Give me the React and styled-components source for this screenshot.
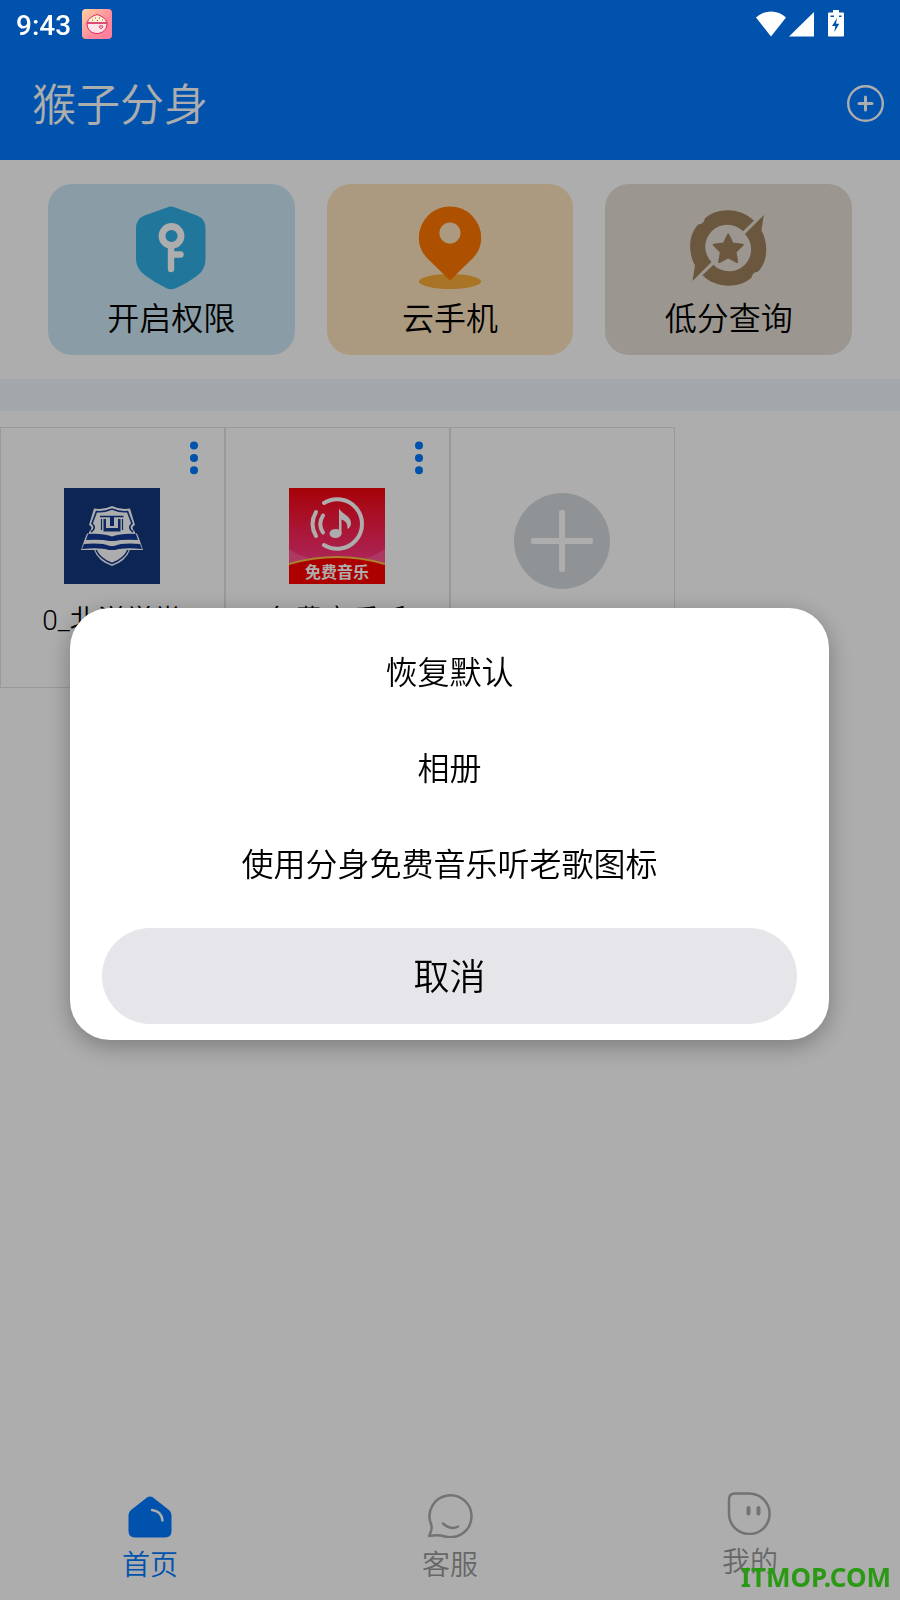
import styled, { createGlobalStyle } from 'styled-components';

const shortcuts = [
    { id: 'permission', label: '开启权限', color: '#cce8f5', Icon: KeyShieldIcon },
    { id: 'cloud', label: '云手机', color: '#fee4bd', Icon: PinIcon },
    { id: 'score', label: '低分查询', color: '#e5ded5', Icon: StarRingIcon },
];

const apps = [
    { id: 1, name: '0_北洋学堂', Icon: SchoolIcon },
    { id: 2, name: '免费音乐听', Icon: MusicIcon },
];

const options = ['恢复默认', '相册', '使用分身免费音乐听老歌图标'];

const tabs = [
    { id: 'home', label: '首页', active: true, Icon: HomeIcon },
    { id: 'service', label: '客服', active: false, Icon: ServiceIcon },
    { id: 'mine', label: '我的', active: false, Icon: MineIcon },
];

function App() {
    return (
        <Screen>
            <GlobalStyle />

            <StatusBar>
                <StatusGroup>
                    <Clock>9:43</Clock>
                    <RiceIcon />
                </StatusGroup>
                <StatusIcons />
            </StatusBar>

            <Header>
                <Title>猴子分身</Title>
                <IconButton aria-label="添加">
                    <svg width="38" height="38" viewBox="0 0 38 38" fill="none" stroke="#fff" strokeLinecap="round">
                        <circle cx="19.5" cy="18.5" r="17.3" strokeWidth="2.4" />
                        <path d="M19.5 12v13M13 18.5h13" strokeWidth="3" />
                    </svg>
                </IconButton>
            </Header>

            <Shortcuts>
                {shortcuts.map(({ id, label, color, Icon }) => (
                    <ShortcutCard key={id} $color={color}>
                        <Icon />
                        <ShortcutLabel>{label}</ShortcutLabel>
                    </ShortcutCard>
                ))}
            </Shortcuts>

            <Band />

            {/* 分身应用列表 */}
            <AppGrid>
                {apps.map(({ id, name, Icon }) => (
                    <AppCell key={id}>
                        <MoreButton aria-label="更多">
                            <svg width="10" height="36" viewBox="0 0 10 36" fill="#007aff">
                                <circle cx="5" cy="5.5" r="4" />
                                <circle cx="5" cy="18" r="4" />
                                <circle cx="5" cy="30.2" r="4" />
                            </svg>
                        </MoreButton>
                        <Icon />
                        <AppName>{name}</AppName>
                    </AppCell>
                ))}
                <AppCell>
                    <AddButton aria-label="添加应用">
                        <svg width="96" height="96" viewBox="0 0 96 96">
                            <circle cx="48" cy="48" r="48" fill="#d4d9dc" />
                            <rect x="45" y="17" width="6" height="62" rx="2" fill="#fff" />
                            <rect x="17" y="45" width="62" height="6" rx="2" fill="#fff" />
                        </svg>
                    </AddButton>
                </AppCell>
            </AppGrid>

            <TabBar>
                {tabs.map(({ id, label, active, Icon }) => (
                    <Tab key={id} href={`#${id}`} $active={active}>
                        <Icon />
                        <span>{label}</span>
                    </Tab>
                ))}
            </TabBar>

            <Scrim>
                <Dialog role="dialog" aria-modal="true" aria-label="选择图标">
                    {options.map((option) => (
                        <OptionButton key={option}>{option}</OptionButton>
                    ))}
                    <CancelButton>取消</CancelButton>
                </Dialog>
            </Scrim>

            <Watermark>ITMOP.COM</Watermark>
        </Screen>
    );
}

export default App;

function RiceIcon() {
    return (
        <svg width="30" height="30" viewBox="0 0 30 30">
            <defs>
                <linearGradient id="rice" x1="0" y1="0" x2="1" y2="1">
                    <stop offset="0" stopColor="#ffd3a0" />
                    <stop offset=".6" stopColor="#ff8a9c" />
                    <stop offset="1" stopColor="#ff7b9c" />
                </linearGradient>
            </defs>
            <rect width="30" height="30" rx="4" fill="url(#rice)" />
            <path d="M5.5 13.5C6 9 11 7 15 5.5C19 7 24 9 24.500 13.500Z" fill="#fdf3d3" stroke="#d8285c" />
            <path d="M5 14.500H25C25 21 20 24.500 15 24.500S5 21 5 14.500Z" fill="#fde3ea" stroke="#d8285c" />
            <path d="M4 14H26" stroke="#e0557c" strokeWidth="1.600" />
            <path d="M10 11h1M13 9h1M17 9h1M15 11.500h1M20 11h1" stroke="#d8285c" />
            <path d="M19 20l-2-2 1-1.500 1 .8 1.200-.8.8 1.500Z" fill="#fbb" stroke="#d8285c" strokeWidth=".8" />
        </svg>
    );
}

function StatusIcons() {
    return (
        <svg width="90" height="28" viewBox="0 0 90 28" fill="#fff">
            <path d="M15 26.500L0 7.500C8-.5 22-.5 30 7.500Z" />
            <path d="M58 2V26.500H33Z" />
            <path
                fillRule="evenodd"
                d="M77 0h6v2.500h4q1 0 1 1v22q0 1-1 1H73q-1 0-1-1v-22q0-1 1-1h4ZM81 8l-5 8h3.300l-1 6 5-8.300H80ZM74.500 5.500v1.500h3.500v-1.500ZM83 5.500v1.500h2.500v-1.500Z"
            />
        </svg>
    );
}

function KeyShieldIcon() {
    return (
        <svg width="84" height="84" viewBox="0 0 84 84">
            <path
                d="M38 1.500Q42-.3 46 1.500L68 9.500Q76.500 13 76.500 22V53Q76.500 63 69 69Q58 77.500 46 82.500Q42 84 38 82.500Q26 77 15 68.500Q7 62 7 53V22Q7 13 15.500 9.500Z"
                fill="#32aee5"
            />
            <circle cx="42.500" cy="30" r="9.500" fill="none" stroke="#fff" strokeWidth="6.800" />
            <path d="M42 41V63M42 48.500H51.500" stroke="#fff" strokeWidth="6.400" strokeLinecap="round" />
        </svg>
    );
}

function PinIcon() {
    return (
        <svg width="84" height="84" viewBox="0 0 84 84">
            <ellipse cx="42" cy="75.500" rx="31.200" ry="7.500" fill="#fbac38" />
            <path
                fillRule="evenodd"
                d="M42 .5A31.200 31.200 0 0 1 73.200 31.700C73.200 40 70 47 64.500 52.500L42 74.500L19.500 52.500C14 47 10.800 40 10.800 31.700A31.200 31.200 0 0 1 42 .5ZM42 16.500A10.600 10.600 0 1 0 42 37.700A10.600 10.600 0 1 0 42 16.500Z"
                fill="#ff7600"
            />
        </svg>
    );
}

function StarRingIcon() {
    const half = 'M5.500 75L8 59.500C1 47 1 29 11.500 18.300Q16.500 18.500 18 12.300C30 1.500 53 1 67 14.700L56 25.300A21.700 21.700 0 0 0 24.500 56Z';

    return (
        <svg width="84" height="84" viewBox="0 0 84 84" fill="#9d805b">
            <path d={half} />
            <path d={half} transform="rotate(180 41.2 42)" />
            <path
                d="M41.200 28.500L45.500 37.500L55.700 38.800L48.500 46L50.200 56L41.200 51.300L32.200 56L33.900 46L26.700 38.800L36.900 37.500Z"
                stroke="#9d805b"
                strokeWidth="2"
                strokeLinejoin="round"
            />
        </svg>
    );
}

function SchoolIcon() {
    return (
        <svg width="96" height="96" viewBox="0 0 96 96">
            <rect width="96" height="96" fill="#12377d" />
            <path d="M48 18Q56 22 66 20.500L71 37Q66 39 71 44V45.500H73L76 53L79 62H66Q62 73 48 78Q34 73 30 62H17L20 53L23 45.500H25V44Q30 39 25 37L30 20.500Q40 22 48 18Z" fill="#fff" />
            <path d="M48 21Q56 24.500 63.500 23.500L68 35.500Q63 40 69 44M48 21Q40 24.500 32.500 23.500L28 35.500Q33 40 27 44" fill="none" stroke="#123a92" strokeWidth="1.600" />
            <path d="M36 28.500H59.500" stroke="#123a92" strokeWidth="1.600" />
            <path d="M46 28.500h4v9.500h-4ZM42 31v9h12v-9h2.500v12.500h-17V31Z" fill="#123a92" />
            <path d="M37.500 31v11M58.500 31v11" stroke="#123a92" strokeWidth="1.200" />
            <path d="M24 46Q38 45 48 48.500Q58 45 72 46L74 52Q58 51 51 53H45Q38 51 22 52ZM20 56Q38 54.500 46 58H50Q58 54.500 76 56L78 61Q60 59 51 62H45Q36 59 18 61Z" fill="#123a92" />
            <path d="M32 62Q36 71 48 75.500Q60 71 64 62" fill="none" stroke="#123a92" strokeWidth="1.600" />
        </svg>
    );
}

function MusicIcon() {
    return (
        <svg width="96" height="96" viewBox="0 0 96 96">
            <defs>
                <linearGradient id="music" x1="0" y1="0" x2="0" y2="1">
                    <stop offset="0" stopColor="#f5040c" />
                    <stop offset=".75" stopColor="#ff3680" />
                </linearGradient>
            </defs>
            <rect width="96" height="96" fill="url(#music)" />
            <path d="M0 61Q10 68 20 70L0 76ZM96 61Q86 68 76 70L96 76Z" fill="#ff6aa0" opacity=".6" />
            <path d="M0 76Q48 62 96 76V96H0Z" fill="#fe0000" />
            <path d="M0 76Q48 62 96 76" fill="none" stroke="#fcbe40" strokeWidth="2" />
            <g fill="none" stroke="#fff" strokeWidth="4" strokeLinecap="round">
                <path d="M35 15A24.800 24.800 0 1 1 35 57" />
                <path d="M27 24Q20 36 27 48M34 27.500Q28.500 36 34 44.500" />
            </g>
            <ellipse cx="46.500" cy="45.500" rx="6" ry="4.500" fill="#fff" />
            <path d="M50 46V20.500C54 27 62 28 62 35Q62 39 58.500 41Q59 33 52.500 31.500V46Z" fill="#fff" />
            <text
                x="48"
                y="90"
                fill="#fff"
                textAnchor="middle"
                fontSize="16"
                fontWeight="700"
                fontFamily="'Noto Sans CJK SC', sans-serif"
            >
                免费音乐
            </text>
        </svg>
    );
}

function HomeIcon() {
    return (
        <svg width="46" height="46" viewBox="0 0 46 46">
            <path d="M20 5.500Q23 3.500 26 5.500L42 18Q44.500 20 44.500 23V39Q44.500 45.500 38 45.500H8Q1.500 45.500 1.500 39V23Q1.500 20 4 18Z" fill="#007aff" />
            <path d="M25 18Q34.500 19 35.500 28.500" fill="none" stroke="#fff" strokeWidth="2.500" strokeLinecap="round" />
        </svg>
    );
}

function ServiceIcon() {
    return (
        <svg width="46" height="46" viewBox="0 0 46 46" fill="none" stroke="#aaa" strokeWidth="2.500" strokeLinecap="round" strokeLinejoin="round">
            <path d="M4 32A21 21 0 1 1 17 44.200Q11 42.500 2 44Q6 37 4 32Z" />
            <path d="M16 31.500Q24 38.500 31 34.500" />
        </svg>
    );
}

function MineIcon() {
    return (
        <svg width="46" height="43" viewBox="0 0 46 43" fill="none" stroke="#aaa" strokeWidth="2.500" strokeLinecap="round">
            <path d="M8 1.500H22.500A20.300 20.300 0 1 1 2 21.500V7.500Q2 1.500 8 1.500Z" />
            <path d="M21.500 16v5.500M31.500 16v5.500" strokeWidth="4" />
        </svg>
    );
}

const GlobalStyle = createGlobalStyle`
    body {
        margin: 0;
        background: #fff;
        font-family: Roboto, 'Noto Sans CJK SC', sans-serif;
        font-weight: 350;
        color: #000;
    }

    button {
        border: 0;
        padding: 0;
        background: none;
        font-family: inherit;
        font-weight: inherit;
        color: inherit;
        cursor: pointer;
    }

    svg {
        display: block;
        flex-shrink: 0;
    }
`;

const Screen = styled.div`
    display: flex;
    flex-direction: column;
    min-height: 100vh;
    background-color: #fff;
`;

const StatusBar = styled.div`
    display: flex;
    align-items: center;
    justify-content: space-between;
    height: 48px;
    padding: 0 54px 0 16px;
    box-sizing: border-box;
    background-color: #007aff;
    color: #fff;

    /* 系统图标不受遮罩影响 */
    & > * {
        position: relative;
        z-index: 2;
    }
`;

const StatusGroup = styled.div`
    display: flex;
    align-items: center;
    gap: 11px;
`;

const Clock = styled.span`
    padding-top: 4px;
    font-size: 28px;
    font-weight: 500;
    line-height: 32px;
`;

const Header = styled.header`
    display: flex;
    align-items: center;
    justify-content: space-between;
    height: 112px;
    padding: 0 16px 0 32px;
    background-color: #007aff;
`;

const Title = styled.h1`
    margin: 0;
    padding-top: 4px;
    font-size: 44px;
    font-weight: inherit;
    line-height: 56px;
    color: #fff;
`;

const IconButton = styled.button`
    display: flex;
`;

const Shortcuts = styled.div`
    display: grid;
    grid-template-columns: repeat(3, 1fr);
    gap: 32px;
    padding: 24px 48px;
`;

const ShortcutCard = styled.button`
    display: flex;
    flex-direction: column;
    align-items: center;
    gap: 5px;
    padding: 22px 16px 12px;
    border-radius: 24px;
    background-color: ${p => p.$color};
`;

const ShortcutLabel = styled.span`
    font-size: 32px;
    line-height: 48px;
`;

const Band = styled.div`
    height: 32px;
    background-color: #f0f6fd;
`;

const AppGrid = styled.main`
    flex: 1;
    display: grid;
    grid-template-columns: repeat(4, 1fr);
    align-content: start;
    padding-top: 16px;
`;

const AppCell = styled.div`
    display: flex;
    flex-direction: column;
    align-items: center;
    padding: 0 1px 46px 0;
    border: 1px solid #e2e2e2;
`;

const MoreButton = styled.button`
    display: flex;
    align-items: center;
    justify-content: center;
    align-self: flex-end;
    width: 32px;
    height: 60px;
    margin-right: 13px;
`;

const AppName = styled.span`
    margin-top: 17px;
    font-size: 28px;
    line-height: 40px;
`;

const AddButton = styled.button`
    margin-top: 65px;
`;

const TabBar = styled.nav`
    display: grid;
    grid-template-columns: repeat(3, 1fr);
    padding-bottom: 12px;
`;

const Tab = styled.a`
    display: flex;
    flex-direction: column;
    align-items: center;
    gap: 6px;
    font-size: 28px;
    line-height: 44px;
    text-decoration: none;
    color: ${p => (p.$active ? '#007aff' : '#999')};
`;

const Scrim = styled.div`
    position: fixed;
    inset: 0;
    z-index: 1;
    display: flex;
    align-items: center;
    padding: 48px 71px 0 70px;
    background-color: rgba(0, 0, 0, 0.32);
`;

const Dialog = styled.div`
    display: flex;
    flex-direction: column;
    flex: 1;
    padding: 16px 32px;
    border-radius: 40px;
    background-color: #fff;
    box-shadow: 0 6px 24px rgba(0, 0, 0, 0.3);
`;

const OptionButton = styled.button`
    height: 96px;
    padding-bottom: 4px;
    font-size: 32px;
`;

const CancelButton = styled.button`
    height: 96px;
    margin-top: 16px;
    padding-bottom: 4px;
    border-radius: 48px;
    background-color: #e5e5ea;
    font-size: 36px;
`;

const Watermark = styled.span`
    position: fixed;
    right: 9px;
    bottom: 5px;
    z-index: 3;
    font-family: 'Noto Sans', sans-serif;
    font-size: 26px;
    font-weight: 700;
    line-height: 36px;
    color: #2a9914;
`;
